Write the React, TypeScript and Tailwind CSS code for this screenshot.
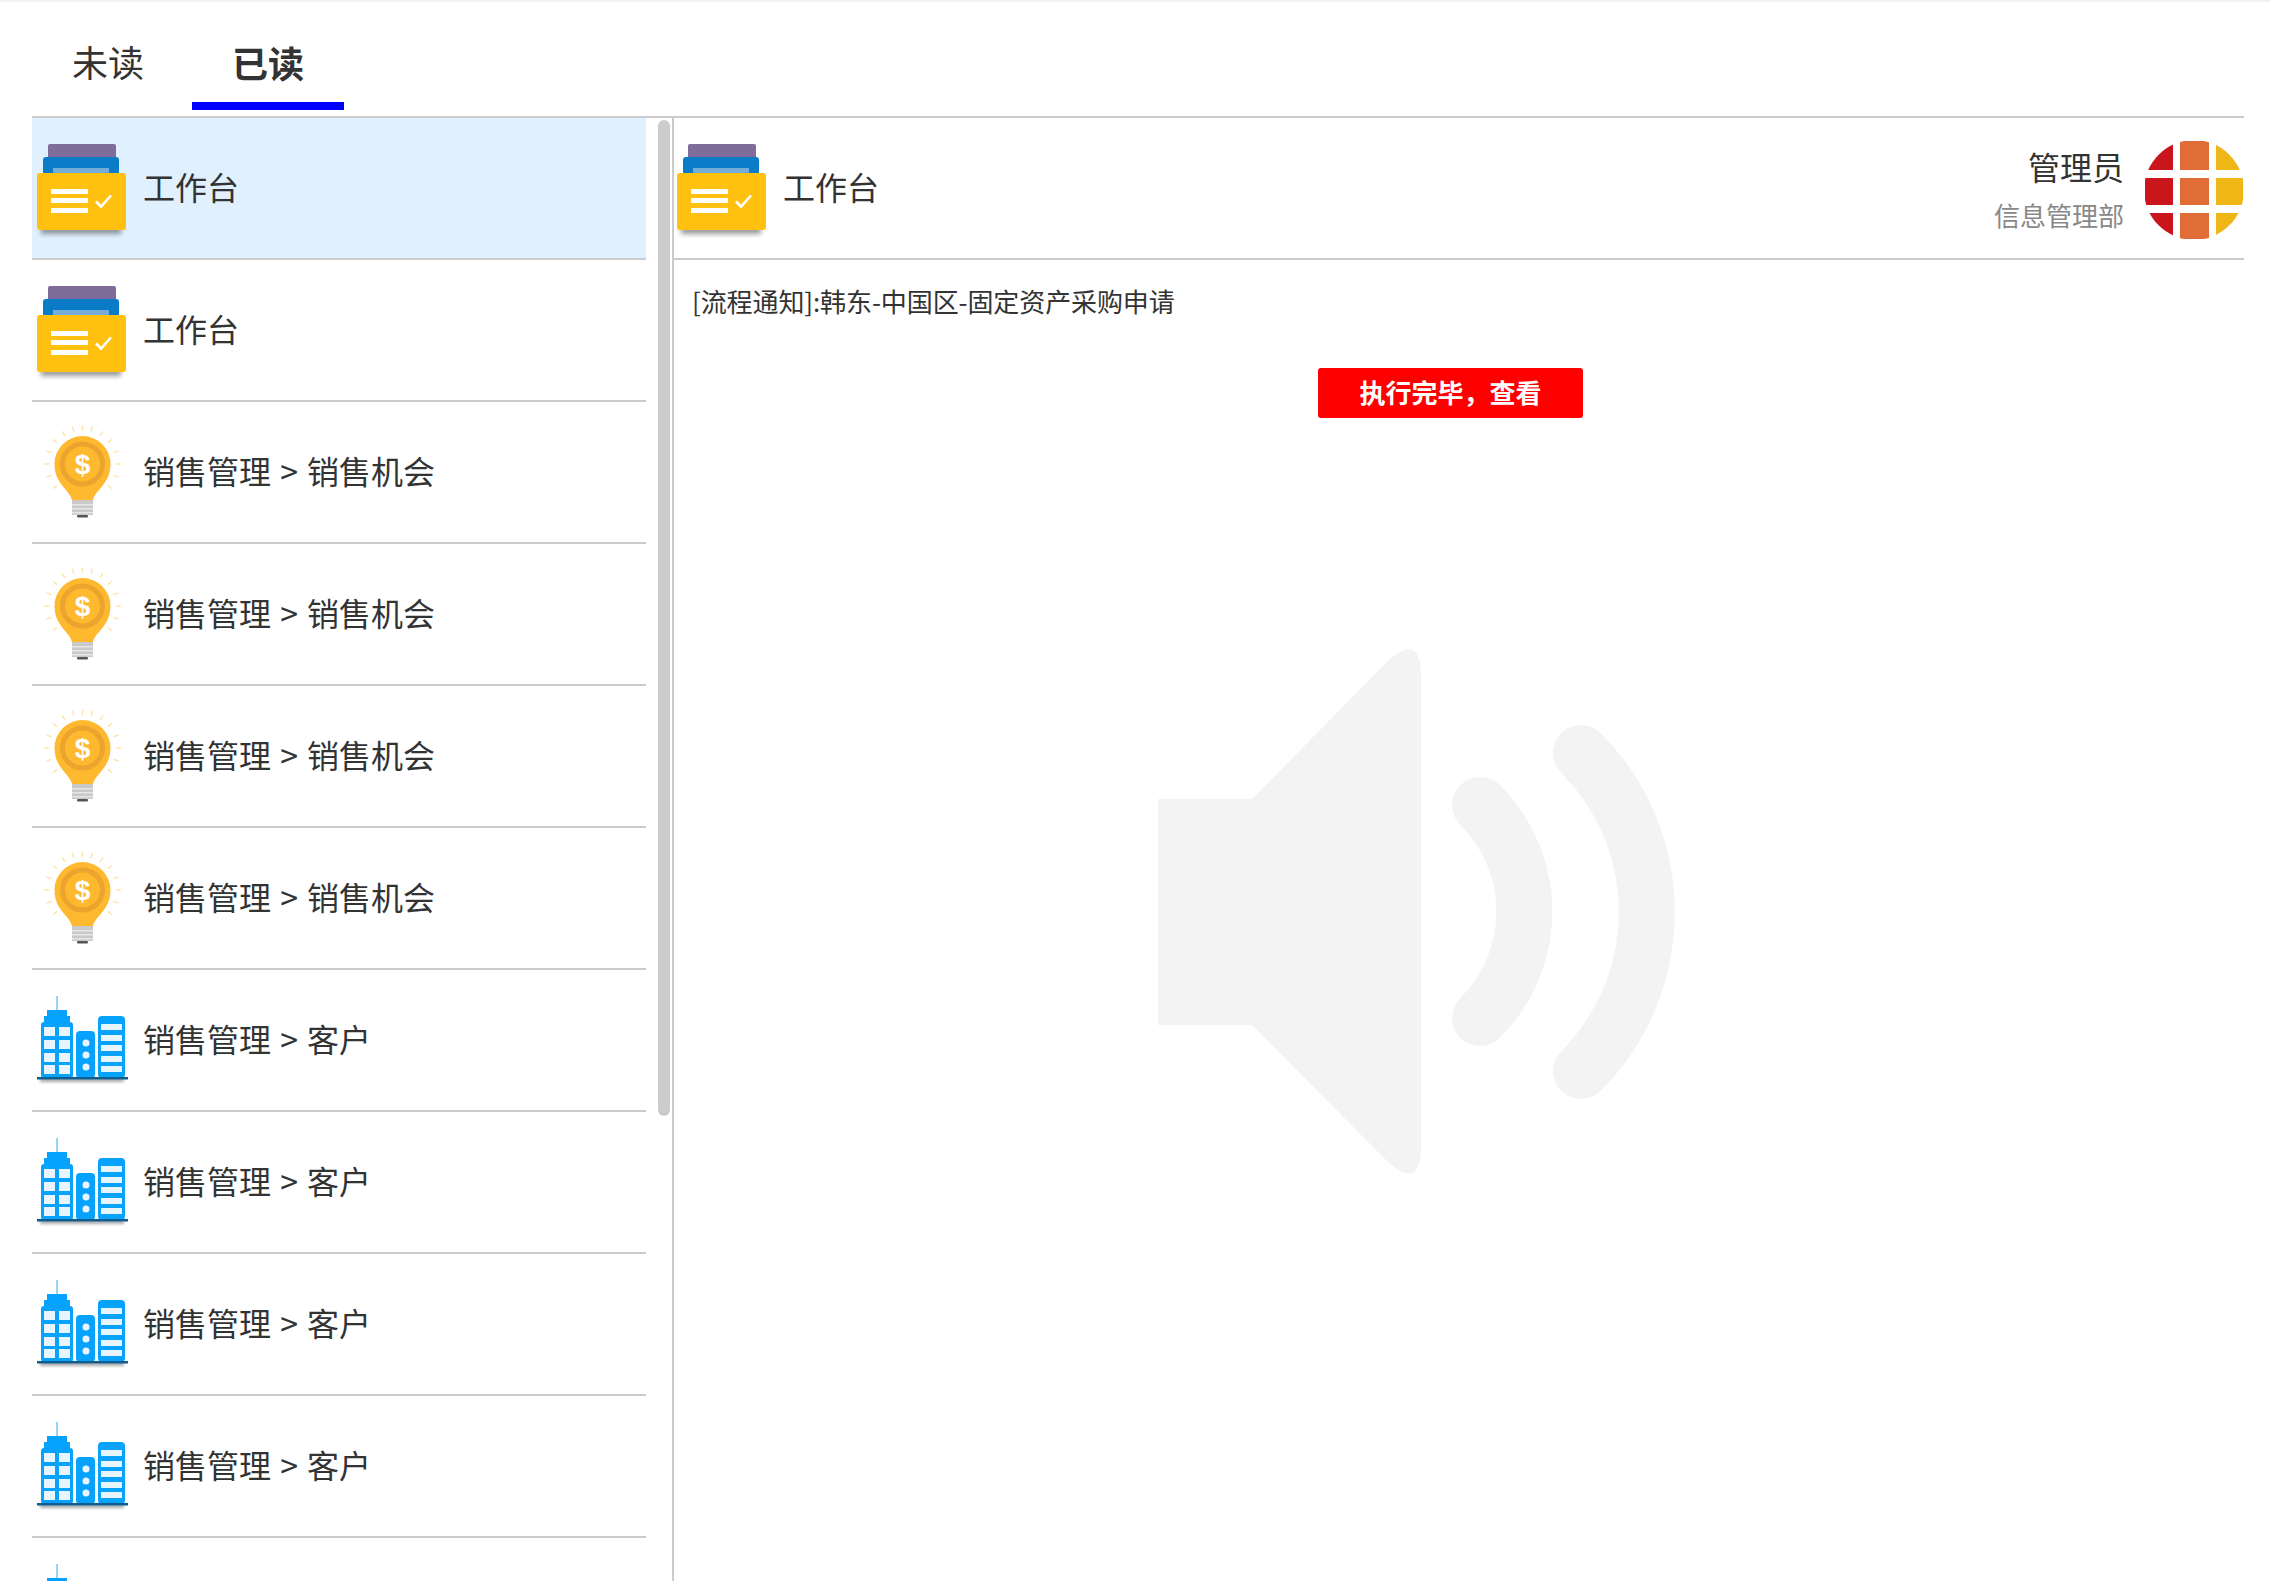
import React from 'react';

type IconKind = 'desk' | 'bulb' | 'city';

interface Notice {
  id: number;
  icon: IconKind;
  title: string;
}

const notices: Notice[] = [
  { id: 1, icon: 'desk', title: '工作台' },
  { id: 2, icon: 'desk', title: '工作台' },
  { id: 3, icon: 'bulb', title: '销售管理 > 销售机会' },
  { id: 4, icon: 'bulb', title: '销售管理 > 销售机会' },
  { id: 5, icon: 'bulb', title: '销售管理 > 销售机会' },
  { id: 6, icon: 'bulb', title: '销售管理 > 销售机会' },
  { id: 7, icon: 'city', title: '销售管理 > 客户' },
  { id: 8, icon: 'city', title: '销售管理 > 客户' },
  { id: 9, icon: 'city', title: '销售管理 > 客户' },
  { id: 10, icon: 'city', title: '销售管理 > 客户' },
  // the last row is cut by the panel, only the top of its icon shows
  { id: 11, icon: 'city', title: '' },
];

const rayAngles = [-180, -160, -140, -122, -105, -90, -75, -58, -40, -20, 0, 20, 40, -200, -220];

const DeskIcon = () => (
  <svg viewBox="0 0 100 100" className="w-[100px] h-[100px] shrink-0">
    <defs>
      <filter id="deskBlur" x="-20%" y="-100%" width="140%" height="300%">
        <feGaussianBlur stdDeviation="2.5" />
      </filter>
    </defs>
    <rect x="16" y="6" width="68" height="15" rx="2" fill="#7f6c9a" />
    <rect x="11" y="19" width="76" height="18" rx="3" fill="#0a7bc6" />
    <rect x="21" y="30" width="56" height="6" fill="#74acd8" />
    <rect x="9" y="88" width="80" height="8" fill="#444" opacity="0.55" filter="url(#deskBlur)" />
    <rect x="5" y="35" width="89" height="57" rx="3" fill="#ffc010" />
    <rect x="19" y="51" width="37" height="5" fill="#fff" />
    <rect x="19" y="60" width="37" height="5" fill="#fff" />
    <rect x="19" y="70" width="37" height="5" fill="#fff" />
    <path d="M64 63.5 L69 68.5 L79 57.5" fill="none" stroke="#fff" strokeWidth="2.6" />
  </svg>
);

const BulbIcon = () => (
  <svg viewBox="0 0 100 100" className="w-[100px] h-[100px] shrink-0">
    {rayAngles.map((a) => {
      const r = (a * Math.PI) / 180;
      return (
        <line
          key={a}
          x1={50.5 + Math.cos(r) * 33}
          y1={42 + Math.sin(r) * 33}
          x2={50.5 + Math.cos(r) * 38.5}
          y2={42 + Math.sin(r) * 38.5}
          stroke="#ffe2a6"
          strokeWidth="1.3"
        />
      );
    })}
    <path
      d="M40 78 C38 68 22.5 62 22.5 42 A28 28 0 1 1 78.5 42 C78.5 62 63 68 61 78 Z"
      fill="#ffb92f"
    />
    <circle cx="50.5" cy="42" r="20" fill="#ffb92f" stroke="#eba42e" strokeWidth="5" />
    <text
      x="50.5"
      y="52"
      textAnchor="middle"
      fontSize="28"
      fontWeight="700"
      fill="#fff"
      fontFamily="'Liberation Sans', sans-serif"
    >
      $
    </text>
    <rect x="40" y="78" width="21" height="15" fill="#c9c9c9" />
    <rect x="40" y="82" width="21" height="1.5" fill="#e6e6e6" />
    <rect x="40" y="86" width="21" height="1.5" fill="#e6e6e6" />
    <rect x="40" y="90" width="21" height="1.5" fill="#e6e6e6" />
    <rect x="45" y="93" width="11" height="2.5" rx="1" fill="#555" />
  </svg>
);

const CityIcon = () => (
  <svg viewBox="0 0 100 100" className="w-[100px] h-[100px] shrink-0">
    <defs>
      <filter id="cityBlur" x="-20%" y="-150%" width="140%" height="400%">
        <feGaussianBlur stdDeviation="1.8" />
      </filter>
    </defs>
    <rect x="8" y="88" width="84" height="4" fill="#555" opacity="0.5" filter="url(#cityBlur)" />
    <rect x="24.6" y="6" width="0.9" height="15" fill="#07a2fb" />
    <rect x="15" y="20" width="20" height="7" fill="#07a2fb" />
    <rect x="12" y="26" width="26" height="7" fill="#07a2fb" />
    <rect x="9" y="32" width="32" height="56" rx="3" fill="#07a2fb" />
    {[37, 50, 63, 75].map((y) => (
      <g key={y} fill="#e8f5fe">
        <rect x="12" y={y} width="11" height="9" />
        <rect x="27" y={y} width="11" height="9" />
      </g>
    ))}
    <rect x="44" y="41" width="19" height="47" rx="4" fill="#07a2fb" />
    {[53, 65, 77].map((y) => (
      <circle key={y} cx="54" cy={y} r="3.5" fill="#e8f5fe" />
    ))}
    <rect x="66" y="26" width="27" height="62" rx="4" fill="#07a2fb" />
    {[34, 45, 55, 66, 76].map((y) => (
      <rect key={y} x="69" y={y} width="21" height="6" fill="#e8f5fe" />
    ))}
    <rect x="5" y="87" width="91" height="2.5" fill="#0e5f90" />
  </svg>
);

const NoticeIcon = ({ kind }: { kind: IconKind }) => {
  if (kind === 'desk') return <DeskIcon />;
  if (kind === 'bulb') return <BulbIcon />;
  return <CityIcon />;
};

const OrgLogo = () => (
  <svg viewBox="0 0 98 98" className="w-[98px] h-[98px] shrink-0 mt-[3px]">
    <defs>
      <clipPath id="orgClip">
        <circle cx="49" cy="49" r="50" />
      </clipPath>
    </defs>
    <g clipPath="url(#orgClip)">
      <rect x="0" y="0" width="28" height="29" fill="#c9151b" />
      <rect x="35" y="0" width="29" height="29" fill="#e06c36" />
      <rect x="71" y="0" width="27" height="29" fill="#efb616" />
      <rect x="0" y="37" width="28" height="27" fill="#c9151b" />
      <rect x="35" y="37" width="29" height="27" fill="#e06c36" />
      <rect x="71" y="37" width="27" height="27" fill="#efb616" />
      <rect x="0" y="72" width="28" height="26" fill="#c9151b" />
      <rect x="35" y="72" width="29" height="26" fill="#e06c36" />
      <rect x="71" y="72" width="27" height="26" fill="#efb616" />
    </g>
  </svg>
);

const Speaker = () => (
  <svg
    viewBox="1150 640 540 550"
    className="absolute left-[470px] top-[377px] w-[540px] h-[550px]"
    fill="#f3f3f3"
  >
    <path d="M1164 802 H1258 L1394 664 Q1427 634 1427 680 V1149 Q1427 1195 1394 1165 L1258 1028 H1164 Z" />
    <path d="M1486 808 A150 150 0 0 1 1486 1021" fill="none" stroke="#f3f3f3" strokeWidth="56" strokeLinecap="round" />
    <path d="M1587 756 A225 225 0 0 1 1587 1074" fill="none" stroke="#f3f3f3" strokeWidth="56" strokeLinecap="round" />
  </svg>
);

const App: React.FC = () => {
  return (
    <div className="w-[2270px] h-[1586px] overflow-hidden bg-white text-[#333] font-['Noto_Sans_CJK_SC','Liberation_Sans',sans-serif]">
      <div className="h-[116px] pl-8 border-t-2 border-[#f2f2f2] flex gap-2">
        <button className="w-[152px] h-[108px] flex items-center justify-center pt-[18px] text-4xl border-b-8 border-transparent">
          未读
        </button>
        <button className="w-[152px] h-[108px] flex items-center justify-center pt-[20px] text-4xl font-semibold border-b-8 border-[#0000ff]">
          已读
        </button>
      </div>

      <div className="ml-8 w-[2212px] h-[1465px] flex border-t-2 border-[#ccc]">
        <div className="w-[614px] shrink-0 overflow-hidden">
          {notices.map((n) => (
            <div
              key={n.id}
              className={`h-[142px] shrink-0 flex items-center gap-[11px] border-b-2 border-[#ccc] ${
                n.id === 1 ? 'bg-[#e0f0ff]' : ''
              }`}
            >
              <NoticeIcon kind={n.icon} />
              <span className="pb-[5px] text-[32px] [word-spacing:2px]">{n.title}</span>
            </div>
          ))}
        </div>
        <div className="ml-3 mt-[2px] w-3 h-[996px] rounded-full bg-[#ccc]" />
        <div className="ml-[2px] flex-1 min-w-0 flex flex-col border-l-2 border-[#ccc]">
          <div className="h-[142px] shrink-0 flex items-center gap-[11px] border-b-2 border-[#ccc] pr-px">
            <div className="-ml-[2px] shrink-0">
              <DeskIcon />
            </div>
            <span className="pb-[5px] text-[32px]">工作台</span>
            <div className="ml-auto mr-[10px] flex flex-col items-end gap-2">
              <span className="text-[32px] leading-[46px]">管理员</span>
              <span className="text-[26px] leading-[36px] text-[#888]">信息管理部</span>
            </div>
            <OrgLogo />
          </div>
          <div className="relative flex-1 flex flex-col">
            <Speaker />
            <p className="relative pl-[18px] pt-[22px] text-[26px] leading-[38px] tracking-[-0.1px]">
              [流程通知]:韩东-中国区-固定资产采购申请
            </p>
            <button className="relative ml-[644px] mt-[48px] w-[265px] h-[50px] pb-[3px] rounded-[3px] bg-[#ff0000] text-white text-[26px] font-bold">
              执行完毕，查看
            </button>
          </div>
        </div>
      </div>
    </div>
  );
};

export default App;
